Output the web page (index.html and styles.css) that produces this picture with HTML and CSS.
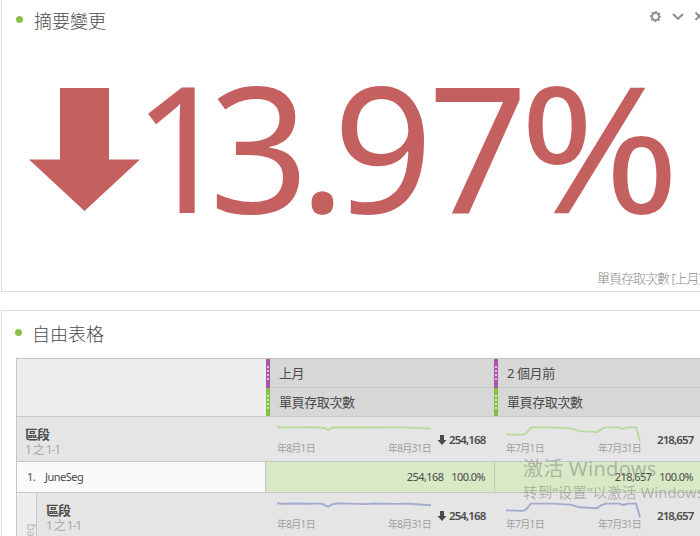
FILE: index.html
```html
<!DOCTYPE html>
<html lang="zh-Hant">
<head>
<meta charset="utf-8">
<title>摘要變更</title>
<link rel="stylesheet" href="styles.css">
</head>
<body>
<section class="panel summary">
  <header class="panel-head">
    <i class="dot"></i><h2>摘要變更</h2>
    <svg class="tools" width="52" height="14" viewBox="0 0 52 14">
      <circle cx="6.5" cy="6.5" r="3.5" fill="none" stroke="#8f8f8f" stroke-width="1.9"/>
      <circle cx="6.5" cy="6.5" r="4.8" fill="none" stroke="#8f8f8f" stroke-width="1.6" stroke-dasharray="1.9 1.87" stroke-dashoffset=".95"/>
      <path d="M24 4l5 4.800L34 4M46.500 2.500l7 7.500M53.500 2.500l-7 7.500" fill="none" stroke="#8f8f8f" stroke-width="2"/>
    </svg>
  </header>
  <svg class="change" width="699" height="160" viewBox="1 70 699 160">
    <path d="M60 88h49v71.500h31L84.500 211 29 159.500h31z"/>
    <text y="213" x="132.500 209 299 333 428">13.97<tspan x="519" textLength="161" lengthAdjust="spacingAndGlyphs">%</tspan></text>
  </svg>
  <p class="caption">單頁存取次數 [上月]</p>
</section>

<section class="panel freeform">
  <header class="panel-head"><i class="dot"></i><h2>自由表格</h2></header>
  <div class="table">
    <div class="row headings">
      <div class="blank"></div>
      <div class="group first">
        <div class="heading period"><i class="grip"></i><span>上月</span></div>
        <div class="heading metric"><i class="grip"></i><span>單頁存取次數</span></div>
      </div>
      <div class="group second">
        <div class="heading period"><i class="grip"></i><span>2 個月前</span></div>
        <div class="heading metric"><i class="grip"></i><span>單頁存取次數</span></div>
      </div>
    </div>

    <div class="row totals">
      <div class="label"><b>區段</b><small>1 之 1-1</small></div>
      <div class="total first">
        <div class="trend">
          <svg width="154" height="26" viewBox="277 417 154 26"><path d="M277 427.300l15 .1 15-.1 15 .3 3.500.6 2.500 1.800 3-1.900 3-.7 30 .1 30-.1 15 .2 22 1"/></svg>
          <div class="dates"><span>年8月1日</span><span>年8月31日</span></div>
        </div>
        <svg class="down" width="10" height="12" viewBox="0 0 10 12"><path d="M3 1h4v5h2.500L5 11 .5 6H3z"/></svg>
        <strong>254,168</strong>
      </div>
      <div class="total second">
        <div class="trend">
          <svg width="135" height="26" viewBox="506 417 135 26"><path d="M506 434.300l16 .6q3-.2 5-2.500l4-5h21l18 1 10 2.700 17 1 5-3.500 4-1.200h13l4.500 1.400 4.500-1.400h8l4 13.600"/></svg>
          <div class="dates"><span>年7月1日</span><span>年7月31日</span></div>
        </div>
        <strong>218,657</strong>
      </div>
    </div>

    <div class="row item">
      <div class="name"><span class="num">1.</span><span>JuneSeg</span></div>
      <div class="value first"><span>254,168</span><span>100.0%</span></div>
      <div class="value second"><span>218,657</span><span>100.0%</span></div>
    </div>

    <div class="row totals nested">
      <div class="side"><span>JuneSeg</span></div>
      <div class="label"><b>區段</b><small>1 之 1-1</small></div>
      <div class="total first">
        <div class="trend">
          <svg width="154" height="26" viewBox="277 493 154 26"><path d="M277 503.300l6 .5 13-.3 13 .2 6-.3 7 .5 6 2.800 4-2.300 5-.9 12 .1 15 .5 10-.6 20 .4 15-.3 11 .9 11 .7"/></svg>
          <div class="dates"><span>年8月1日</span><span>年8月31日</span></div>
        </div>
        <svg class="down" width="10" height="12" viewBox="0 0 10 12"><path d="M3 1h4v5h2.500L5 11 .5 6H3z"/></svg>
        <strong>254,168</strong>
      </div>
      <div class="total second">
        <div class="trend">
          <svg width="135" height="26" viewBox="506 493 135 26"><path d="M506 510.300l16 .6q3-.2 5-2.500l4-4.800h21l18 1 10 2.700 17 1 5-3.500 4-1.200h13l4.500 1.400 4.500-1.400h8l4 13.600"/></svg>
          <div class="dates"><span>年7月1日</span><span>年7月31日</span></div>
        </div>
        <strong>218,657</strong>
      </div>
    </div>
  </div>
</section>

<div class="watermark" lang="zh-Hans"><p class="wm-title">激活 Windows</p><p class="wm-sub">转到“设置”以激活 Windows</p></div>
</body>
</html>
```

FILE: styles.css
```css
* { box-sizing: border-box; }
body {
  margin: 0; width: 700px; height: 536px; overflow: hidden; position: relative;
  background: #fff; color: #4b4b4b;
  font-family: "Noto Sans", "Noto Sans CJK TC", sans-serif; font-size: 11px;
}
h2, p { margin: 0; font-weight: 300; white-space: nowrap; }
.panel { width: 720px; margin-left: 1px; border: 1px solid #dcdcdc; }
.summary { height: 292px; border-top: 0; }
.freeform { height: 226px; margin-top: 18px; border-bottom: 0; overflow: hidden; }
.panel-head { display: flex; align-items: center; height: 42px; padding-left: 14px; }
.freeform .panel-head { height: 47px; padding: 0 0 2px 13px; }
.dot { width: 7px; height: 7px; border-radius: 50%; background: #8bc34a; margin: -3px 11px 0 0; }
.freeform .dot { margin-right: 10px; }
.summary .dot { margin-top: -4px; }
h2 { font-size: 18px; line-height: 24px; }
.summary h2 { margin-top: -1px; }
.tools { margin: -8px 0 0 543px; flex: none; }
.change { display: block; margin: 28px 0 0 -1px; fill: #c4605f; }
.change text { font: 175px "Noto Sans", sans-serif; }
.caption { width: 698px; padding-left: 595px; margin-top: 38px; font-size: 13px; line-height: 20px; letter-spacing: -1px; color: #8c8c8c; font-weight: 300; }

.table { width: 706px; margin-left: 14px; border: solid #c6c6c6; border-width: 1px 0 0 1px; }
.row { display: flex; border-bottom: 1px solid #c6c6c6; white-space: nowrap; }
.headings { height: 58px; background: #eee; }
.blank { width: 249px; }
.first { width: 228px; flex: none; }
.second { width: 228px; flex: none; }
.heading { display: flex; align-items: center; height: 28px; background: #d7d7d7; font-size: 13px; letter-spacing: -.4px; }
.period { height: 29px; border-bottom: 1px solid #c6c6c6; }
.heading span { margin: -2px 0 0 9px; }
.grip { align-self: stretch; width: 4px; background-color: #aa55a8; margin-bottom: -1px;
  background-image: repeating-linear-gradient(to bottom, #e3bde2 0 2px, transparent 2px 4px);
  background-size: 2px 16px; background-repeat: no-repeat; background-position: 1px 7px; }
.metric .grip { background-color: #83c341; background-image: repeating-linear-gradient(to bottom, #cfeaae 0 2px, transparent 2px 4px); margin: 0; }

.totals { height: 45px; background: #e5e5e5; }
.label { width: 249px; flex: none; padding: 9px 0 0 8px; }
.label b { display: block; font-size: 13px; line-height: 16px; letter-spacing: -1px; }
.label small { display: block; font-size: 12px; line-height: 16px; letter-spacing: -1.1px; color: #a8a8a8; }
.nested .label b, .nested .label small { margin-left: 1px; }
.total { display: flex; padding-left: 11px; }
.trend { width: 154px; flex: none; }
.trend svg { display: block; }
.trend path { fill: none; stroke: #b9d99b; stroke-width: 1.9; stroke-linejoin: round; }
.nested .trend path { stroke: #a3abcf; }
.total.second { padding-left: 12px; }
.second .trend { width: 135px; }
.dates { display: flex; justify-content: space-between; font-size: 10px; line-height: 12px; letter-spacing: -.7px; color: #a0a0a0; margin: -1px 0 0; }
.down { margin: 17px 2px 0 6px; fill: #4b4b4b; flex: none; }
.total strong { font-size: 11.500px; line-height: 16px; margin-top: 15px; font-weight: 600; letter-spacing: -.9px; }
.second strong { margin-left: 16px; }

.item { height: 31px; background: #fafafa; line-height: 30px; }
.name { width: 248px; flex: none; display: flex; padding-left: 10px; letter-spacing: -.5px; }
.num { width: 18px; }
.value { display: flex; justify-content: flex-end; gap: 8px; background: #d7e9c5; border-left: 1px solid #c6c6c6; letter-spacing: -.6px; }
.value.first { width: 229px; padding-right: 9px; }
.value.second { width: 229px; padding-right: 30px; }

.side { width: 20px; height: 44px; flex: none; overflow: hidden; background: #eee; border-right: 1px solid #c6c6c6; writing-mode: vertical-rl; }
.side span { display: block; transform: rotate(180deg); height: 70px; margin-top: 31px; text-align: right; color: #bbb; line-height: 13px; font-size: 12px; letter-spacing: -.5px; }
.nested { height: 44px; border-bottom: 0; }
.nested .label { width: 229px; }

.watermark { position: absolute; left: 523px; top: 455px; width: 177px; overflow: hidden; color: rgba(120, 120, 120, .48); font-family: "Noto Sans", "Noto Sans CJK SC", sans-serif; }
.watermark p { font-weight: 400; }
.wm-title { font-size: 20px; line-height: 28px; letter-spacing: .3px; }
.wm-sub { font-size: 14.500px; line-height: 19px; letter-spacing: .2px; }
```
